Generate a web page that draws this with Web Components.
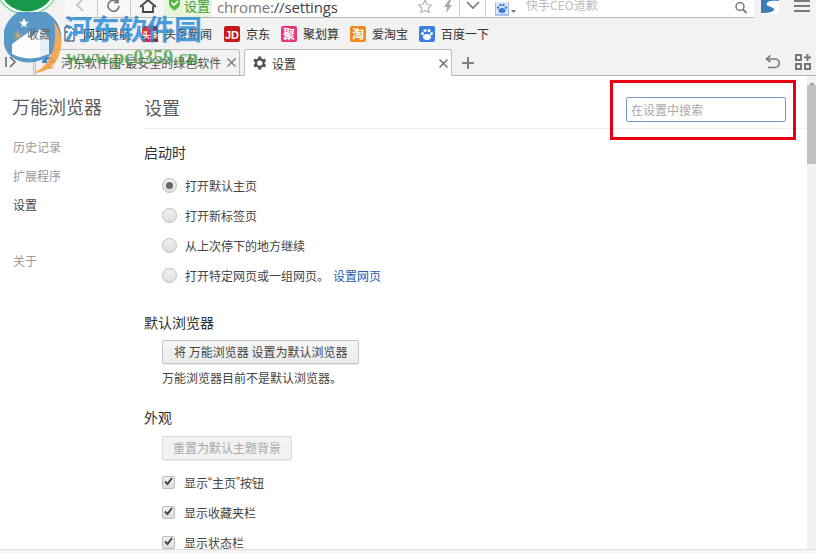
<!DOCTYPE html>
<html lang="zh">
<head>
<meta charset="utf-8">
<title>设置</title>
<style>
    html, body { margin: 0; height: 100%; overflow: hidden; background: #fff; }
    body { font-family: "Noto Sans CJK SC", "Liberation Sans", sans-serif; }
</style>
</head>
<body>
<browser-window>
    <browser-toolbar></browser-toolbar>
    <bookmark-bar>
        <bookmark-item style="margin-left:61px" label="网址导航"><svg viewBox="0 0 16 16" width="16" height="16"><path d="M4 1h6l3 3v11H4z" fill="#fff" stroke="#333"/><path d="M4 6h3" stroke="#3a8fd8" stroke-width="2"/></svg></bookmark-item>
        <bookmark-item style="margin-left:11px" label="头条新闻"><svg viewBox="0 0 16 16" width="16" height="16"><rect width="16" height="16" fill="#dd2a2f"/><rect x="9" y="0" width="7" height="16" fill="#3a3f5a" opacity=".65"/><text x="8" y="11.500" font-size="8" fill="#fff" text-anchor="middle" font-family="Noto Sans CJK SC" font-weight="700">头条</text></svg></bookmark-item>
        <bookmark-item style="margin-left:12px" label="京东"><svg viewBox="0 0 16 16" width="16" height="16"><rect width="16" height="16" rx="2" fill="#c8161d"/><text x="8" y="12.500" font-size="11" fill="#fff" text-anchor="middle" font-family="Liberation Sans" font-weight="700">JD</text></svg></bookmark-item>
        <bookmark-item style="margin-left:11px" label="聚划算"><svg viewBox="0 0 16 16" width="16" height="16"><rect width="16" height="16" rx="2" fill="#e5387a"/><text x="8" y="12.500" font-size="12" fill="#fff" text-anchor="middle" font-family="Noto Sans CJK SC" font-weight="700">聚</text></svg></bookmark-item>
        <bookmark-item style="margin-left:11px" label="爱淘宝"><svg viewBox="0 0 16 16" width="16" height="16"><rect width="16" height="16" rx="2" fill="#f08a1d"/><text x="8" y="12.500" font-size="12" fill="#fff" text-anchor="middle" font-family="Noto Sans CJK SC" font-weight="700">淘</text></svg></bookmark-item>
        <bookmark-item style="margin-left:11px" label="百度一下"><svg viewBox="0 0 16 16" width="16" height="16"><rect width="16" height="16" rx="2" fill="#3b7fe6"/><g fill="#fff"><ellipse cx="8" cy="11" rx="4" ry="3"/><circle cx="3.500" cy="7.500" r="1.500"/><circle cx="6" cy="4.500" r="1.500"/><circle cx="10" cy="4.500" r="1.500"/><circle cx="12.500" cy="7.500" r="1.500"/></g></svg></bookmark-item>
    </bookmark-bar>
    <tab-strip></tab-strip>
    <page-body>
        <settings-nav slot="nav"></settings-nav>
        <settings-main slot="main">
            <settings-section heading="启动时" style="margin-top:13px">
                <radio-row checked>打开默认主页</radio-row>
                <radio-row>打开新标签页</radio-row>
                <radio-row>从上次停下的地方继续</radio-row>
                <radio-row>打开特定网页或一组网页。<a-link>设置网页</a-link></radio-row>
            </settings-section>
            <settings-section heading="默认浏览器" style="margin-top:22px">
                <push-button>将 万能浏览器 设置为默认浏览器</push-button>
                <plain-note>万能浏览器目前不是默认浏览器。</plain-note>
            </settings-section>
            <settings-section heading="外观" style="margin-top:20px">
                <push-button disabled style="margin-top:9px">重置为默认主题背景</push-button>
                <check-row style="margin-top:7px">显示<span style="font-family:'Liberation Sans',sans-serif">“</span>主页<span style="font-family:'Liberation Sans',sans-serif">”</span>按钮</check-row>
                <check-row>显示收藏夹栏</check-row>
                <check-row>显示状态栏</check-row>
            </settings-section>
        </settings-main>
    </page-body>
    <status-line></status-line>
    <site-watermark></site-watermark>
    <red-callout></red-callout>
</browser-window>

<script>
const CJK = '"Noto Sans CJK SC", "Liberation Sans", sans-serif';

class BrowserWindow extends HTMLElement {
    constructor () {
        super();
        this.attachShadow({ mode: 'open' });
        this.shadowRoot.innerHTML = `
            <style>
                :host {
                    display: flex;
                    flex-direction: column;
                    position: relative;
                    width: 816px;
                    height: 553px;
                    overflow: hidden;
                    font-family: ${CJK};
                    font-size: 12px;
                }
            </style>
            <slot></slot>
        `;
    }
}

class BrowserToolbar extends HTMLElement {
    constructor () {
        super();
        this.attachShadow({ mode: 'open' });
        this.shadowRoot.innerHTML = `
            <style>
                :host {
                    display: flex;
                    flex: none;
                    height: 18px;
                    background: #f2f2f2;
                    overflow: hidden;
                }
                .left { width: 65px; flex: none; }
                .btn {
                    flex: none;
                    width: 32px;
                    height: 17px;
                    border-right: 1px solid #c9c9c9;
                    border-bottom: 1px solid #b8b8b8;
                    background: #f8f8f8;
                    display: flex;
                    justify-content: center;
                }
                .btn.home { background: #f6f6f6; width: 33px; border-right: 0; }
                .address {
                    flex: none;
                    width: 590px;
                    height: 17px;
                    border-bottom: 1px solid #b8b8b8;
                    background: #fff;
                    display: flex;
                    align-items: center;
                }
                .secure {
                    flex: none;
                    width: 48px;
                    height: 17px;
                    background: #e7f5dc;
                    display: flex;
                    align-items: flex-start;
                    gap: 3px;
                    padding-left: 4px;
                    box-sizing: border-box;
                    color: #3c9a3c;
                    font-size: 13px;
                    line-height: 11px;
                }
                .url {
                    margin-left: 5px;
                    width: 196px;
                    flex: none;
                    font: 15px/16px "Open Sans", sans-serif;
                    letter-spacing: -.15px;
                    color: #777;
                    margin-top: -4px;
                }
                .url b { font-weight: 400; color: #444; }
                .tool { flex: none; width: 23px; height: 17px; display: flex; justify-content: center; }
                .tool.line { border-left: 1px solid #cfcfcf; width: 25px; }
                .paw { flex: none; margin-left: 9px; margin-right: 2px; display: flex; }
                .hint { flex: 1; color: #bcbcbc; font-size: 12px; line-height: 14px; margin-left: 10px; margin-top: -7px; }
                .right { flex: none; display: flex; width: 61px; }
                .s-logo { margin-left: 7px; }
                .burger { margin-left: 15px; margin-top: 0; }
                svg { display: block; flex: none; }
            </style>
            <div class="left"></div>
            <div class="btn"><svg width="14" height="14" viewBox="0 0 14 14"><path d="M9 -1L3 5l6 6" fill="none" stroke="#c4c4c4" stroke-width="1.800"/></svg></div>
            <div class="btn"><svg width="16" height="16" viewBox="0 0 16 16"><path d="M13 6a5.500 5.500 0 1 1-1.500-4M12 -2v4.500H8" fill="none" stroke="#757575" stroke-width="1.600"/></svg></div>
            <div class="btn home"><svg width="18" height="16" viewBox="0 0 18 16"><path d="M1 7L9 0l8 7M4 6v6h10V6" fill="none" stroke="#444" stroke-width="1.800"/></svg></div>
            <div class="address">
                <div class="secure"><svg width="13" height="11" viewBox="0 0 13 11"><path d="M1 -3h11v6c0 4-3 6-5.500 7.500C4 9 1 7 1 3z" fill="#58b947"/><path d="M3.500 2.500L6 5l4-4" fill="none" stroke="#fff" stroke-width="1.600"/></svg>设置</div>
                <div class="url">chrome:<b>//settings</b></div>
                <div class="tool"><svg width="14" height="14" viewBox="0 0 14 14"><path d="M7 0l2 4.500 4.500.5-3.300 3 1 4.500L7 10.500 2.800 12.500l1-4.500L.5 5 5 4.500z" fill="none" stroke="#b5b5b5" stroke-width="1.200"/></svg></div>
                <div class="tool"><svg width="10" height="14" viewBox="0 0 10 14"><path d="M6 0L1 7h3L3 13l6-8H6l2-5z" fill="#a8a8a8"/></svg></div>
                <div class="tool line"><svg width="14" height="12" viewBox="0 0 14 12"><path d="M1 2l6 6 6-6" fill="none" stroke="#777" stroke-width="1.600"/></svg></div>
                <div class="tool line" style="width:0"></div>
                <div class="paw"><svg width="14" height="14" viewBox="0 0 14 14"><rect y="-1" width="14" height="14" fill="#dce8fa" stroke="#5b8fe0"/><g fill="#3f76d8"><ellipse cx="7" cy="8.500" rx="3.500" ry="2.500"/><circle cx="3" cy="5.500" r="1.200"/><circle cx="5.500" cy="3" r="1.200"/><circle cx="8.500" cy="3" r="1.200"/><circle cx="11" cy="5.500" r="1.200"/></g></svg></div>
                <svg width="5" height="14" viewBox="0 0 5 14"><path d="M0 8h5l-2.500 3z" fill="#777"/></svg>
                <div class="hint">快手CEO道歉</div>
                <div style="width:20px;flex:none"><svg width="14" height="14" viewBox="0 0 14 14"><circle cx="6" cy="4.500" r="4" fill="none" stroke="#777" stroke-width="1.500"/><path d="M9 7.500l3.500 3.500" stroke="#777" stroke-width="1.800"/></svg></div>
            </div>
            <div class="right">
                <svg class="s-logo" width="18" height="14" viewBox="0 0 18 14"><rect width="18" height="14" fill="#3a7fb8"/><path d="M18 1C10 0 4 2 6 5c1.500 2 8 2 7 5-.5 1.500-4 3-13 3v1h18z" fill="#fff"/></svg>
                <svg class="burger" width="16" height="13" viewBox="0 0 16 13"><path d="M0 1h16M0 6h16M0 11h16" stroke="#7a7a7a" stroke-width="2"/></svg>
            </div>
        `;
    }
}

class BookmarkBar extends HTMLElement {
    constructor () {
        super();
        this.attachShadow({ mode: 'open' });
        this.shadowRoot.innerHTML = `
            <style>
                :host {
                    display: flex;
                    flex: none;
                    align-items: center;
                    height: 30px;
                    padding-top: 1px;
                    box-sizing: border-box;
                    background: #f2f2f2;
                }
            </style>
            <slot></slot>
        `;
    }
}

class BookmarkItem extends HTMLElement {
    constructor () {
        super();
        this.attachShadow({ mode: 'open' });
        this.shadowRoot.innerHTML = `
            <style>
                :host { display: flex; align-items: center; gap: 6px; color: #333; font-size: 12px; }
                ::slotted(svg) { display: block; }
            </style>
            <slot></slot><span></span>
        `;
    }
    connectedCallback() {
        this.shadowRoot.querySelector('span').textContent = this.getAttribute('label');
    }
}

class TabStrip extends HTMLElement {
    constructor () {
        super();
        this.attachShadow({ mode: 'open' });
        this.shadowRoot.innerHTML = `
            <style>
                :host {
                    display: flex;
                    flex: none;
                    align-items: flex-end;
                    height: 28px;
                    box-sizing: border-box;
                    background: #f2f2f2;
                    border-bottom: 1px solid #b4b4b4;
                    position: relative;
                }
                .toggle { width: 34px; flex: none; height: 27px; display: flex; align-items: center; padding-left: 5px; box-sizing: border-box; border-right: 1px solid #bdbdbd; }
                .tab {
                    flex: none;
                    height: 26px;
                    box-sizing: border-box;
                    display: flex;
                    align-items: center;
                    border: 1px solid #bdbdbd;
                    border-bottom: 0;
                    border-radius: 3px 3px 0 0;
                    font-size: 12px;
                    color: #555;
                }
                .one { width: 205px; padding-left: 5px; background: #f2f2f2; margin-left: 1px; }
                .two { width: 208px; padding-left: 6px; background: #fff; margin-left: 4px; height: 27px; margin-bottom: -1px; color: #333; }
                .title { flex: 1; margin-left: 5px; white-space: nowrap; overflow: hidden; }
                .close { flex: none; width: 9px; height: 9px; margin-right: 3px; }
                .plus { margin-left: 10px; margin-bottom: 6px; }
                .tail { margin-left: auto; display: flex; gap: 15px; margin-right: 5px; margin-bottom: 5px; align-items: center; }
                svg { display: block; flex: none; }
            </style>
            <div class="toggle"><svg width="12" height="12" viewBox="0 0 12 12"><path d="M1 1v10" stroke="#666" stroke-width="1.500"/><path d="M5 1l5 5-5 5" fill="none" stroke="#666" stroke-width="1.500"/></svg></div>
            <div class="tab one">
                <svg width="15" height="15" viewBox="0 0 15 15"><path d="M1 8a6.500 6.500 0 0 1 13 0z" fill="#3f86c6"/><path d="M2 10a6.500 6.500 0 0 0 12 0c-2 3-8 3-12 0z" fill="#f0a04b"/><path d="M6 9V5l3-1v5z" fill="#fff"/></svg>
                <span class="title">河东软件园-最安全的绿色软件</span>
                <svg class="close" viewBox="0 0 9 9"><path d="M.5.500l8 8M8.500.500l-8 8" stroke="#777" stroke-width="1.300"/></svg>
            </div>
            <div class="tab two">
                <svg width="18" height="18" viewBox="0 0 24 24" style="margin-left:-1px;margin-right:-1px"><path fill="#555" d="M19.400 13a7.500 7.500 0 0 0 0-2l2.100-1.600-2-3.500-2.500 1a7.500 7.500 0 0 0-1.700-1L15 3.200h-4l-.4 2.700a7.500 7.500 0 0 0-1.700 1l-2.500-1-2 3.500L6.600 11a7.500 7.500 0 0 0 0 2l-2.100 1.600 2 3.500 2.500-1a7.500 7.500 0 0 0 1.700 1l.3 2.700h4l.4-2.700a7.500 7.500 0 0 0 1.700-1l2.500 1 2-3.500zM13 15.500a3.500 3.500 0 1 1 0-7 3.500 3.500 0 0 1 0 7z"/></svg>
                <span class="title">设置</span>
                <svg class="close" viewBox="0 0 9 9"><path d="M.5.500l8 8M8.500.500l-8 8" stroke="#666" stroke-width="1.300"/></svg>
            </div>
            <svg class="plus" width="12" height="12" viewBox="0 0 12 12"><path d="M6 0v12M0 6h12" stroke="#808080" stroke-width="2"/></svg>
            <div class="tail">
                <svg width="15" height="14" viewBox="0 0 15 14"><path d="M3 4h7a4 4 0 0 1 0 8.500H3" fill="none" stroke="#777" stroke-width="1.600"/><path d="M5.500 .5L1.500 4l4 3" fill="none" stroke="#777" stroke-width="1.600"/></svg>
                <svg width="16" height="16" viewBox="0 0 16 16"><g fill="none" stroke="#777" stroke-width="2"><rect x="1" y="1" width="5" height="5"/><rect x="1" y="10" width="5" height="5"/><rect x="10" y="10" width="5" height="5"/></g><path d="M12.500 0v7M9 3.500h7" stroke="#777" stroke-width="2"/></svg>
            </div>
        `;
    }
}

class PageBody extends HTMLElement {
    constructor () {
        super();
        this.attachShadow({ mode: 'open' });
        this.shadowRoot.innerHTML = `
            <style>
                :host { display: flex; flex: 1; min-height: 0; background: #fff; overflow: hidden; }
                .bar { width: 9px; flex: none; background: #f1f1f1; display: flex; flex-direction: column; align-items: center; }
                .thumb { width: 100%; height: 79px; margin-top: 9px; background: #c1c1c1; }
                .up { width: 0; height: 0; margin-top: 6px; border: 3px solid transparent; border-top: 0; border-bottom: 3px solid #a3a3a3; margin-bottom: -9px; }
            </style>
            <slot name="nav"></slot>
            <slot name="main"></slot>
            <div class="bar"><div class="up"></div><div class="thumb"></div></div>
        `;
    }
}

class SettingsNav extends HTMLElement {
    constructor () {
        super();
        this.attachShadow({ mode: 'open' });
        this.shadowRoot.innerHTML = `
            <style>
                :host { display: block; flex: none; width: 144px; box-sizing: border-box; padding: 17px 0 0 12px; font-size: 12px; color: #999; }
                h1 { margin: 0 0 13px; font-weight: 400; font-size: 18px; line-height: 26px; color: #5c5c5c; }
                div { height: 29px; line-height: 29px; margin-left: 1px; }
                .on { color: #464646; }
                .gap { margin-top: 27px; }
            </style>
            <h1>万能浏览器</h1>
            <div>历史记录</div>
            <div>扩展程序</div>
            <div class="on">设置</div>
            <div class="gap">关于</div>
        `;
    }
}

class SettingsMain extends HTMLElement {
    constructor () {
        super();
        this.attachShadow({ mode: 'open' });
        this.shadowRoot.innerHTML = `
            <style>
                :host { display: block; flex: none; width: 663px; box-sizing: border-box; overflow: hidden; }
                header { display: flex; justify-content: space-between; align-items: center; height: 53px; padding-top: 10px; box-sizing: border-box; border-bottom: 1px solid #eeeeee; }
                h1 { margin: 0; font-weight: 400; font-size: 18px; line-height: 26px; color: #5c5c5c; }
                .search {
                    width: 160px;
                    height: 25px;
                    margin-right: 21px;
                    margin-top: 4px;
                    box-sizing: border-box;
                    border: 1px solid #7396c9;
                    border-radius: 2px;
                    padding-left: 4px;
                    font-size: 12px;
                    line-height: 23px;
                    color: #a8a8a8;
                }
            </style>
            <header><h1>设置</h1><div class="search">在设置中搜索</div></header>
            <slot></slot>
        `;
    }
}

class SettingsSection extends HTMLElement {
    constructor () {
        super();
        this.attachShadow({ mode: 'open' });
        this.shadowRoot.innerHTML = `
            <style>
                :host { display: block; }
                h3 { margin: 0 0 8px; font-weight: 400; font-size: 14px; line-height: 20px; color: #303030; }
            </style>
            <h3></h3>
            <slot></slot>
        `;
    }
    connectedCallback() {
        this.shadowRoot.querySelector('h3').textContent = this.getAttribute('heading');
    }
}

class RadioRow extends HTMLElement {
    constructor () {
        super();
        this.attachShadow({ mode: 'open' });
        this.shadowRoot.innerHTML = `
            <style>
                :host { display: flex; align-items: center; height: 30px; margin-left: 18px; color: #444; font-size: 12px; }
                .dot {
                    flex: none;
                    width: 15px;
                    height: 15px;
                    box-sizing: border-box;
                    margin-right: 8px;
                    border-radius: 50%;
                    border: 1px solid #bdbdbd;
                    background: linear-gradient(#f1f1f1, #dedede);
                    display: flex;
                    align-items: center;
                    justify-content: center;
                }
                .dot i { display: none; width: 7px; height: 7px; border-radius: 50%; background: #666; }
                :host([checked]) .dot i { display: block; }
            </style>
            <span class="dot"><i></i></span><slot></slot>
        `;
    }
}

class CheckRow extends HTMLElement {
    constructor () {
        super();
        this.attachShadow({ mode: 'open' });
        this.shadowRoot.innerHTML = `
            <style>
                :host { display: flex; align-items: center; height: 30px; margin-left: 18px; color: #444; font-size: 12px; }
                .box {
                    flex: none;
                    width: 13px;
                    height: 13px;
                    box-sizing: border-box;
                    margin-right: 9px;
                    border: 1px solid #bdbdbd;
                    border-radius: 2px;
                    background: linear-gradient(#f1f1f1, #dedede);
                }
                svg { display: block; margin: -1px 0 0 0; }
            </style>
            <span class="box"><svg width="11" height="11" viewBox="0 0 11 11"><path d="M2 5.500l2.500 2.500L9 2" fill="none" stroke="#444" stroke-width="2"/></svg></span><slot></slot>
        `;
    }
}

class ALink extends HTMLElement {
    constructor () {
        super();
        this.attachShadow({ mode: 'open' });
        this.shadowRoot.innerHTML = `
            <style>:host { display: inline; color: #2a5db0; margin-left: 4px; }</style>
            <slot></slot>
        `;
    }
}

class PushButton extends HTMLElement {
    constructor () {
        super();
        this.attachShadow({ mode: 'open' });
        this.shadowRoot.innerHTML = `
            <style>
                :host {
                    display: block;
                    width: fit-content;
                    height: 24px;
                    margin-left: 18px;
                    padding: 0 11px;
                    box-sizing: border-box;
                    border: 1px solid #c4c4c4;
                    border-radius: 2px;
                    background: linear-gradient(#f5f5f5, #ececec);
                    box-shadow: 0 1px 0 rgba(0,0,0,.08);
                    font-size: 12px;
                    line-height: 22px;
                    color: #444;
                }
                :host([disabled]) { color: #a9a9a9; border-color: #dcdcdc; background: #f2f2f2; padding: 0 10px; }
            </style>
            <slot></slot>
        `;
    }
}

class PlainNote extends HTMLElement {
    constructor () {
        super();
        this.attachShadow({ mode: 'open' });
        this.shadowRoot.innerHTML = `
            <style>:host { display: block; margin: 5px 0 0 18px; font-size: 12px; line-height: 18px; color: #444; }</style>
            <slot></slot>
        `;
    }
}

class StatusLine extends HTMLElement {
    constructor () {
        super();
        this.attachShadow({ mode: 'open' });
        this.shadowRoot.innerHTML = `
            <style>:host { display: block; flex: none; height: 4px; box-sizing: border-box; border-top: 1px solid #dcdcdc; background: #f4f4f4; }</style>
        `;
    }
}

// the site's stamp sits on top of the browser chrome
class SiteWatermark extends HTMLElement {
    constructor () {
        super();
        this.attachShadow({ mode: 'open' });
        this.shadowRoot.innerHTML = `
            <style>
                :host { position: absolute; left: 0; top: 0; width: 240px; height: 76px; pointer-events: none; }
                svg { position: absolute; display: block; }
                .cn, .en { position: absolute; white-space: nowrap; font-weight: 700; }
                .cn { left: 64px; top: 10px; font-size: 28px; line-height: 36px; letter-spacing: -.5px; color: #2f8fd6; opacity: .85; }
                .en { left: 66px; top: 46px; font: 700 20px/22px "Liberation Serif", serif; color: #3f9a3a; opacity: .75; }
                .star { position: absolute; left: 12px; top: 28px; color: #e0b050; font-size: 11px; line-height: 12px; opacity: .7; }
                .fav { position: absolute; left: 27px; top: 25px; font-size: 12px; line-height: 18px; color: #6a6a6a; }
            </style>
            <svg style="left:-8px;top:-52px" width="70" height="70" viewBox="0 0 70 70"><circle cx="35" cy="35" r="33" fill="#c6eed2"/><circle cx="35" cy="35" r="31.500" fill="#fff" stroke="#54c47e" stroke-width="1"/><circle cx="35" cy="35" r="28.500" fill="#17994a"/></svg>
            <svg style="left:4px;top:12px" width="60" height="62" viewBox="0 0 60 62" opacity=".9">
                <path d="M3 40A29 29 0 1 1 56 34C35 58 11 52 3 40z" fill="#4a8fc4"/>
                <path d="M50 10c10 12 10 32-2 42-6 5-12 8-18 9 18-8 24-31 20-51z" fill="#f5a04a"/>
                <path d="M31 60c10-3 17-9 21-18l3 1c-3 10-12 17-24 18z" fill="#f5a04a"/>
                <path d="M8 32l18-13v8l10-10v28c-10 3-20 1-28-3z" fill="#fff"/>
                <path d="M36 17l9 7v18l-9 3z" fill="#e8f1f8"/>
                <path d="M20 6l1.500 3.500L25 10l-3 2 .7 3.500L20 13.500 17.300 15.500l.7-3.500-3-2 3.500-.5z" fill="#fff"/>
            </svg>
            <span class="star">★</span>
            <span class="fav">收藏</span>
            <span class="cn">河东软件园</span>
            <span class="en">www.pc0359.cn</span>
        `;
    }
}

// red annotation frame drawn on the screenshot
class RedCallout extends HTMLElement {
    constructor () {
        super();
        this.attachShadow({ mode: 'open' });
        this.shadowRoot.innerHTML = `
            <style>
                :host {
                    position: absolute;
                    left: 610px;
                    top: 80px;
                    width: 186px;
                    height: 60px;
                    box-sizing: border-box;
                    border: 3px solid #e60012;
                    pointer-events: none;
                }
            </style>
        `;
    }
}

customElements.define('browser-window', BrowserWindow);
customElements.define('browser-toolbar', BrowserToolbar);
customElements.define('bookmark-bar', BookmarkBar);
customElements.define('bookmark-item', BookmarkItem);
customElements.define('tab-strip', TabStrip);
customElements.define('page-body', PageBody);
customElements.define('settings-nav', SettingsNav);
customElements.define('settings-main', SettingsMain);
customElements.define('settings-section', SettingsSection);
customElements.define('radio-row', RadioRow);
customElements.define('check-row', CheckRow);
customElements.define('a-link', ALink);
customElements.define('push-button', PushButton);
customElements.define('plain-note', PlainNote);
customElements.define('status-line', StatusLine);
customElements.define('site-watermark', SiteWatermark);
customElements.define('red-callout', RedCallout);
</script>
</body>
</html>
